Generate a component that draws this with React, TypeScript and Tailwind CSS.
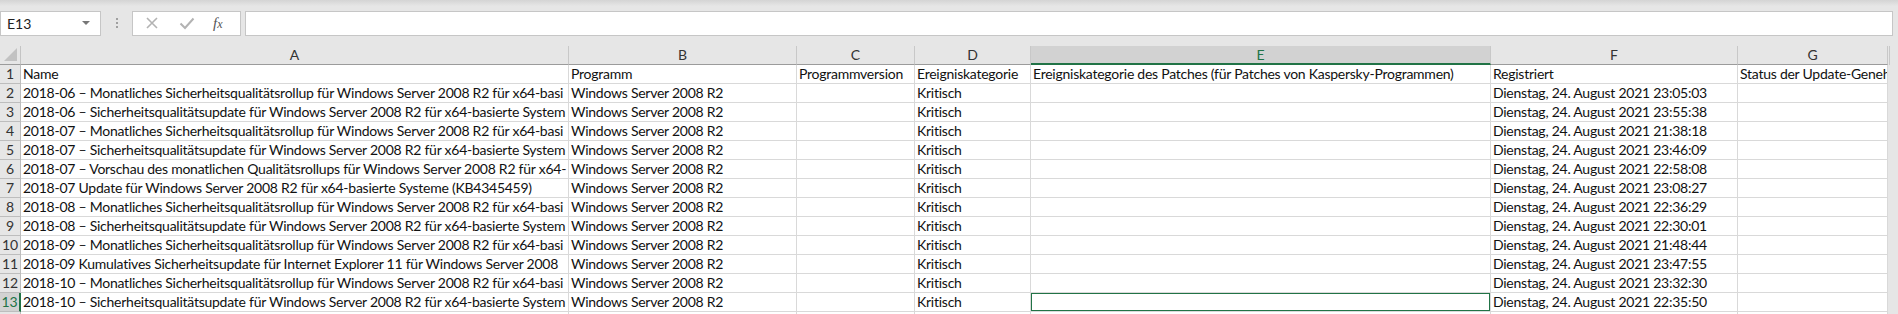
import React from "react";

const cols = [
  { key: "A", w: "w-[548px]" },
  { key: "B", w: "w-[228px]" },
  { key: "C", w: "w-[118px]" },
  { key: "D", w: "w-[116px]" },
  { key: "E", w: "w-[460px]" },
  { key: "F", w: "w-[247px]" },
  { key: "G", w: "w-[150px]" },
];

const monat = "Monatliches Sicherheitsqualitätsrollup für Windows Server 2008 R2 für x64-basi";
const sicher = "Sicherheitsqualitätsupdate für Windows Server 2008 R2 für x64-basierte System";

const rows: [string, string][] = [
  [`2018-06 – ${monat}`, "23:05:03"],
  [`2018-06 – ${sicher}`, "23:55:38"],
  [`2018-07 – ${monat}`, "21:38:18"],
  [`2018-07 – ${sicher}`, "23:46:09"],
  ["2018-07 – Vorschau des monatlichen Qualitätsrollups für Windows Server 2008 R2 für x64-", "22:58:08"],
  ["2018-07 Update für Windows Server 2008 R2 für x64-basierte Systeme (KB4345459)", "23:08:27"],
  [`2018-08 – ${monat}`, "22:36:29"],
  [`2018-08 – ${sicher}`, "22:30:01"],
  [`2018-09 – ${monat}`, "21:48:44"],
  ["2018-09 Kumulatives Sicherheitsupdate für Internet Explorer 11 für Windows Server 2008", "23:47:55"],
  [`2018-10 – ${monat}`, "23:32:30"],
  [`2018-10 – ${sicher}`, "22:35:50"],
];

const header = ["Name", "Programm", "Programmversion", "Ereigniskategorie", "Ereigniskategorie des Patches (für Patches von Kaspersky-Programmen)", "Registriert", "Status der Update-Geneh"];

const Cell = ({ w, text, selected }: { w: string; text?: string; selected?: boolean }) => (
  <div className={`${w} h-[19px] shrink-0 relative border-r border-b border-[#d9d9d9] bg-white overflow-hidden whitespace-nowrap pl-[2px] leading-[18px] text-[14px] tracking-[-0.25px] text-[#111]`}>
    {text}
    {selected && <div className="absolute -left-[1px] -top-[1px] -right-[1px] -bottom-[1px] border-2 border-[#217346]" />}
  </div>
);

const RowNum = ({ n, active }: { n: number; active?: boolean }) => (
  <div
    className={`w-[21px] h-[19px] shrink-0 flex items-center justify-center text-[14px] leading-none border-b ${
      active ? "bg-[#d2d2d2] text-[#217346] border-r-2 border-r-[#217346] border-b-[#bdbdbd]" : "bg-[#e6e6e6] text-[#333] border-r border-[#bdbdbd]"
    }`}
  >
    {n}
  </div>
);

export default function App() {
  return (
    <div className="w-[1898px] h-[314px] bg-[#e6e6e6] overflow-hidden font-['Lato','Liberation_Sans',sans-serif] select-none">
      {/* formula bar */}
      <div className="h-[46px] bg-gradient-to-b from-[#d4d4d4] to-[#e6e6e6] bg-[length:100%_6px] bg-no-repeat">
        <div className="flex items-center h-full pt-[10px] pb-[10px]">
          <div className="w-[101px] h-[25px] bg-white border border-[#c6c6c6] flex items-center justify-between pl-[6px] pr-[10px] text-[14px] text-[#222]">
            <span>E13</span>
            <span className="w-0 h-0 border-l-[4px] border-r-[4px] border-t-[4px] border-l-transparent border-r-transparent border-t-[#777]" />
          </div>
          <div className="w-[31px] flex flex-col items-center gap-[2px]">
            <span className="w-[2px] h-[2px] bg-[#a0a0a0]" />
            <span className="w-[2px] h-[2px] bg-[#a0a0a0]" />
            <span className="w-[2px] h-[2px] bg-[#a0a0a0]" />
          </div>
          <div className="w-[109px] h-[25px] bg-white border border-[#c6c6c6] flex items-center pl-[12px] gap-[20px]">
            <svg width="14" height="14" viewBox="0 0 14 14">
              <path d="M2 2L12 12M12 2L2 12" stroke="#b3b3b3" strokeWidth="1.6" />
            </svg>
            <svg width="16" height="14" viewBox="0 0 16 14">
              <path d="M1.5 7.5L6 12L14.5 2.5" stroke="#b3b3b3" strokeWidth="2" fill="none" />
            </svg>
            <span className="font-['Liberation_Serif',serif] italic text-[15px] text-[#555] leading-none -ml-[2px]">
              f<span className="text-[12px]">x</span>
            </span>
          </div>
          <div className="ml-[4px] w-[1648px] h-[25px] bg-white border border-[#c6c6c6]" />
        </div>
      </div>

      {/* column headers */}
      <div className="flex h-[19px]">
        <div className="w-[21px] h-[19px] shrink-0 border-r border-b border-[#9b9b9b] border-r-[#c4c4c4] relative overflow-hidden">
          <div className="absolute right-[3px] bottom-[3px] w-0 h-0 border-b-[13px] border-l-[13px] border-l-transparent border-b-[#c2c2c2]" />
        </div>
        {cols.map((c) => (
          <div
            key={c.key}
            className={`${c.w} h-[19px] shrink-0 flex items-center justify-center text-[14px] leading-none border-r border-[#c8c8c8] ${
              c.key === "E" ? "bg-[#d2d2d2] text-[#217346] border-b-2 border-b-[#217346]" : "bg-[#e6e6e6] text-[#333] border-b border-b-[#9b9b9b]"
            }`}
          >
            {c.key}
          </div>
        ))}
        <div className="w-[2px] h-[19px] border-r border-[#c8c8c8]" />
      </div>

      {/* row 1 */}
      <div className="flex">
        <RowNum n={1} />
        {cols.map((c, i) => (
          <Cell key={c.key} w={c.w} text={header[i]} />
        ))}
      </div>

      {rows.map(([name, time], idx) => {
        const n = idx + 2;
        const active = n === 13;
        return (
          <div key={n} className="flex">
            <RowNum n={n} active={active} />
            <Cell w={cols[0].w} text={name} />
            <Cell w={cols[1].w} text="Windows Server 2008 R2" />
            <Cell w={cols[2].w} />
            <Cell w={cols[3].w} text="Kritisch" />
            <Cell w={cols[4].w} selected={active} />
            <Cell w={cols[5].w} text={`Dienstag, 24. August 2021 ${time}`} />
            <Cell w={cols[6].w} />
          </div>
        );
      })}
      <div className="flex">
        <RowNum n={14} />
        {cols.map((c) => (
          <Cell key={c.key} w={c.w} />
        ))}
      </div>
    </div>
  );
}
